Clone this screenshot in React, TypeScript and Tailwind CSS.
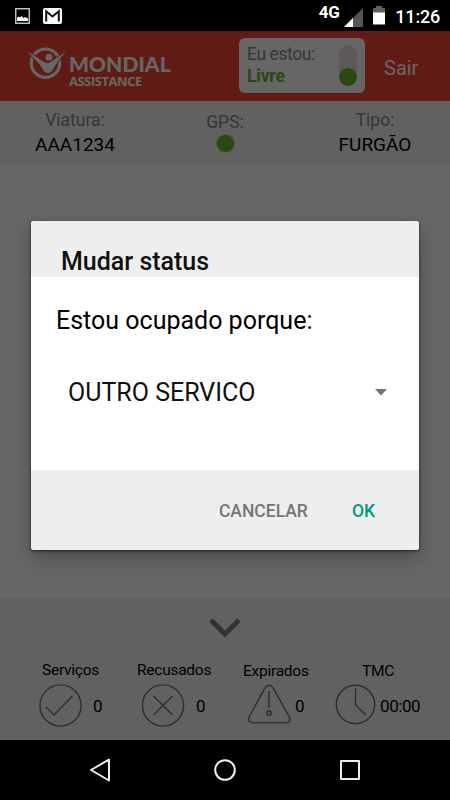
import type { ReactNode } from 'react';

interface Stat {
  label: string;
  value: string;
  icon: ReactNode;
  boxClass: string;
  labelClass: string;
  rowClass: string;
  valueClass: string;
}

const stats: Stat[] = [
  {
    label: 'Serviços',
    value: '0',
    icon: <CheckCircleIcon />,
    boxClass: 'pl-[39px] w-[134px]',
    labelClass: 'pl-[3px] pt-[61px]',
    rowClass: 'gap-[11px] pt-1',
    valueClass: 'pt-px',
  },
  {
    label: 'Recusados',
    value: '0',
    icon: <CrossCircleIcon />,
    boxClass: 'pl-[3px] w-[108px]',
    labelClass: 'pt-[61px]',
    rowClass: 'pl-[5px] gap-[11px] pt-1',
    valueClass: '',
  },
  {
    label: 'Expirados',
    value: '0',
    icon: <WarningIcon />,
    boxClass: 'pl-px w-[88px]',
    labelClass: 'pt-[62px]',
    rowClass: 'pl-[5px] gap-1 pt-[3px]',
    valueClass: '',
  },
  {
    label: 'TMC',
    value: '00:00',
    icon: <ClockIcon />,
    boxClass: 'pl-[5px] w-[120px]',
    labelClass: 'pl-[27px] pt-[62px]',
    rowClass: 'gap-[4px] pt-[3px]',
    valueClass: 'tracking-tight',
  },
];

function CheckCircleIcon() {
  return (
    <svg width="43" height="43" viewBox="0 0 43 43" fill="none" stroke="#707070" strokeWidth="1.4">
      <circle cx="21.5" cy="21.5" r="20.6" />
      <path d="M7 23l8 8L33.5 12" />
    </svg>
  );
}

function CrossCircleIcon() {
  return (
    <svg width="43" height="43" viewBox="0 0 43 43" fill="none" stroke="#707070" strokeWidth="1.4">
      <circle cx="21" cy="21.5" r="20.6" />
      <path d="M11.5 12l19 19M30.5 12l-19 19" />
    </svg>
  );
}

function WarningIcon() {
  return (
    <svg width="43" height="43" viewBox="0 0 43 43" fill="none" stroke="#707070" strokeWidth="1.4">
      <path d="M16.8 4.2Q21 -1.6 25.2 4.2L41 32.2Q44 38.7 37 38.9H6Q-1.5 38.7 1.5 32.2Z" />
      <path d="M21 7v17" />
      <circle cx="21" cy="29" r="2.2" />
    </svg>
  );
}

function ClockIcon() {
  return (
    <svg width="41" height="43" viewBox="0 0 41 43" fill="none" stroke="#707070" strokeWidth="1.4">
      <circle cx="20.5" cy="20.5" r="19.2" />
      <path d="M20.5 4.500v16.500l10.500 10" />
    </svg>
  );
}

function StatusBar() {
  return (
    <div className="flex h-[31px] shrink-0 items-center bg-black pr-[10px] pl-[15px] text-white">
      <svg width="15" height="16" viewBox="0 0 15 16">
        <rect x="0.75" y="0.75" width="13.5" height="14.5" fill="#000" stroke="#d8d8d8" strokeWidth="1.3" />
        <path d="M2 13V10l1.500-1.500L5 9.500 6.500 8l2 2 1.500-1 3 1.500V13z" fill="#fff" />
      </svg>
      <svg className="ml-[13px]" width="19" height="16" viewBox="0 0 19 16">
        <rect width="19" height="16" rx="2" fill="#fff" />
        <path d="M3.200 13.500V3.300l6.300 5.200 6.300-5.200v10.200" fill="none" stroke="#111" strokeWidth="2" />
      </svg>
      <div className="flex-1" />
      <span className="mb-[7px] text-[17px] leading-4 font-bold tracking-tight">4G</span>
      <svg className="mt-[3px] ml-[5px]" width="19" height="19" viewBox="0 0 19 19">
        <path d="M19 0v19H0z" fill="#555" />
        <path d="M9 10v9H0z" fill="#fff" />
      </svg>
      <svg className="ml-[10px]" width="12" height="19" viewBox="0 0 12 19">
        <path d="M3 0h6v2h3v5H0V2h3z" fill="#606060" />
        <path d="M0 6.500h12v12H0z" fill="#fff" />
      </svg>
      <span className="ml-[10px] pt-0.5 text-[18px] leading-5 font-medium tracking-[-0.2px]">11:26</span>
    </div>
  );
}

function Logo() {
  return (
    <div className="flex h-full w-[210px] pl-[27px] text-white">
      <svg className="mt-[15px] shrink-0" width="40" height="34" viewBox="0 0 40 34">
        <circle cx="18.5" cy="17.2" r="14.2" fill="none" stroke="#fff" strokeWidth="3.2" />
        {/* figure with raised arms, outlined in the header red to cut the ring */}
        <path
          d="M0.8 5.5L16 15.5Q20.5 18.500 25 15L39.2 5.5Q33 11.500 30 17L24.500 25.500Q21.500 28.500 17.500 26Q13 18 8 13.500Q4 9.500 0.8 5.5Z"
          fill="#fff"
          stroke="#f44336"
          strokeWidth="2"
          paintOrder="stroke"
        />
        <circle cx="22" cy="11.2" r="3.4" fill="#fff" />
      </svg>
      <div className="ml-[2px] flex flex-col gap-px pt-[23px]">
        <p className="font-[Lato] text-[21px] leading-[19px] font-black tracking-[0.05px]">MONDIAL</p>
        <p className="font-['Open_Sans'] text-[13px] leading-[14px] font-bold tracking-[-0.45px]">ASSISTANCE</p>
      </div>
    </div>
  );
}

function Header() {
  return (
    <header className="flex h-[70px] shrink-0 bg-[#f44336]">
      <Logo />
      <div className="mt-[7px] ml-[29px] flex h-[55px] w-[126px] justify-between rounded-md bg-white pt-[7px] pr-2 pl-2">
        <div className="text-[17.5px] leading-[22px] tracking-[-0.4px]">
          <p className="-mt-0.5 text-[#888]">Eu estou:</p>
          <p className="font-bold tracking-[-0.2px] text-[#69b32d]">Livre</p>
        </div>
        <div className="flex h-[41px] w-[18px] items-end rounded-full bg-[#e8dddd]">
          <div className="size-[18px] rounded-full bg-[#69b32d]" />
        </div>
      </div>
      <span className="mt-[25px] ml-[19px] text-[20px] leading-6 text-white">Sair</span>
    </header>
  );
}

function VehicleInfo() {
  return (
    <div className="grid h-[62px] shrink-0 grid-cols-3 bg-[#f2f2f2] text-center text-[19px] leading-6">
      <div className="pt-[7px]">
        <p className="text-[17.5px] text-[#888]">Viatura:</p>
        <p className="mt-px">AAA1234</p>
      </div>
      <div className="flex flex-col items-center pt-[9px]">
        <p className="text-[17.5px] text-[#888]">GPS:</p>
        <div className="size-[19px] rounded-full border border-white/60 bg-[#69b32d]" />
      </div>
      <div className="pt-[7px]">
        <p className="text-[17.5px] text-[#888]">Tipo:</p>
        <p className="mt-px">FURGÃO</p>
      </div>
    </div>
  );
}

function Footer() {
  return (
    <footer className="relative flex h-[142px] shrink-0 bg-[#f2f2f2]">
      <svg className="absolute top-[20px] left-[209px]" width="32" height="22" viewBox="0 0 32 22" fill="none">
        <path d="M3.5 3.5L16 16L28.5 3.5" stroke="#808080" strokeWidth="5" strokeLinecap="round" />
      </svg>
      {stats.map((stat) => (
        <div key={stat.label} className={stat.boxClass}>
          <p className={`text-[15.5px] leading-[22px] tracking-[-0.25px] ${stat.labelClass}`}>{stat.label}</p>
          <div className={`-mt-px flex items-center ${stat.rowClass}`}>
            {stat.icon}
            <span className={`text-[17px] leading-5 ${stat.valueClass}`}>{stat.value}</span>
          </div>
        </div>
      ))}
    </footer>
  );
}

function StatusDialog() {
  return (
    <div className="h-[329px] w-[388px] overflow-hidden rounded-[3px] bg-white shadow-[0_8px_18px_rgba(0,0,0,0.25),0_1px_3px_rgba(0,0,0,0.6)]">
      <h2 className="h-14 bg-[#eee] pt-[25px] pl-[30px] text-[25px] leading-8 font-medium text-[#111]">
        Mudar status
      </h2>
      <div className="h-[193px] pt-[28px] pl-[25px] text-[25px] leading-8">
        <p>Estou ocupado porque:</p>
        <div className="mt-10 flex items-center justify-between pr-[32px] pl-3">
          <span className="text-[#111]">OUTRO SERVICO</span>
          <svg className="-mt-0.5" width="12" height="7" viewBox="0 0 12 7">
            <path d="M0 0h12L6 6.5z" fill="#757575" />
          </svg>
        </div>
      </div>
      <div className="flex h-20 items-center justify-end gap-11 bg-[#eee] pt-0.5 pr-11 text-[17.5px] font-medium">
        <button className="text-[#757575]">CANCELAR</button>
        <button className="text-[#009688]">OK</button>
      </div>
    </div>
  );
}

function NavBar() {
  return (
    <nav className="flex h-[60px] shrink-0 items-center justify-between bg-black px-[89px]">
      <svg width="22" height="26" viewBox="0 0 22 26" fill="none" stroke="#eee" strokeWidth="2" strokeLinejoin="round">
        <path d="M20 2.5v21L2 13z" />
      </svg>
      <svg width="24" height="24" viewBox="0 0 24 24" fill="none" stroke="#eee" strokeWidth="2">
        <circle cx="12" cy="12" r="9.8" />
      </svg>
      <svg width="22" height="22" viewBox="0 0 22 22" fill="none" stroke="#eee" strokeWidth="2" strokeLinejoin="round">
        <rect x="2" y="2" width="18" height="18" />
      </svg>
    </nav>
  );
}

export default function App() {
  return (
    <div className="flex h-[800px] w-[450px] flex-col overflow-hidden bg-black font-[Roboto,sans-serif] text-black">
      <StatusBar />
      <div className="relative flex h-[709px] flex-col bg-white">
        <Header />
        <VehicleInfo />
        <main className="flex-1" />
        <Footer />
        <div className="absolute inset-0 flex items-center justify-center bg-black/60">
          <StatusDialog />
        </div>
      </div>
      <NavBar />
    </div>
  );
}
